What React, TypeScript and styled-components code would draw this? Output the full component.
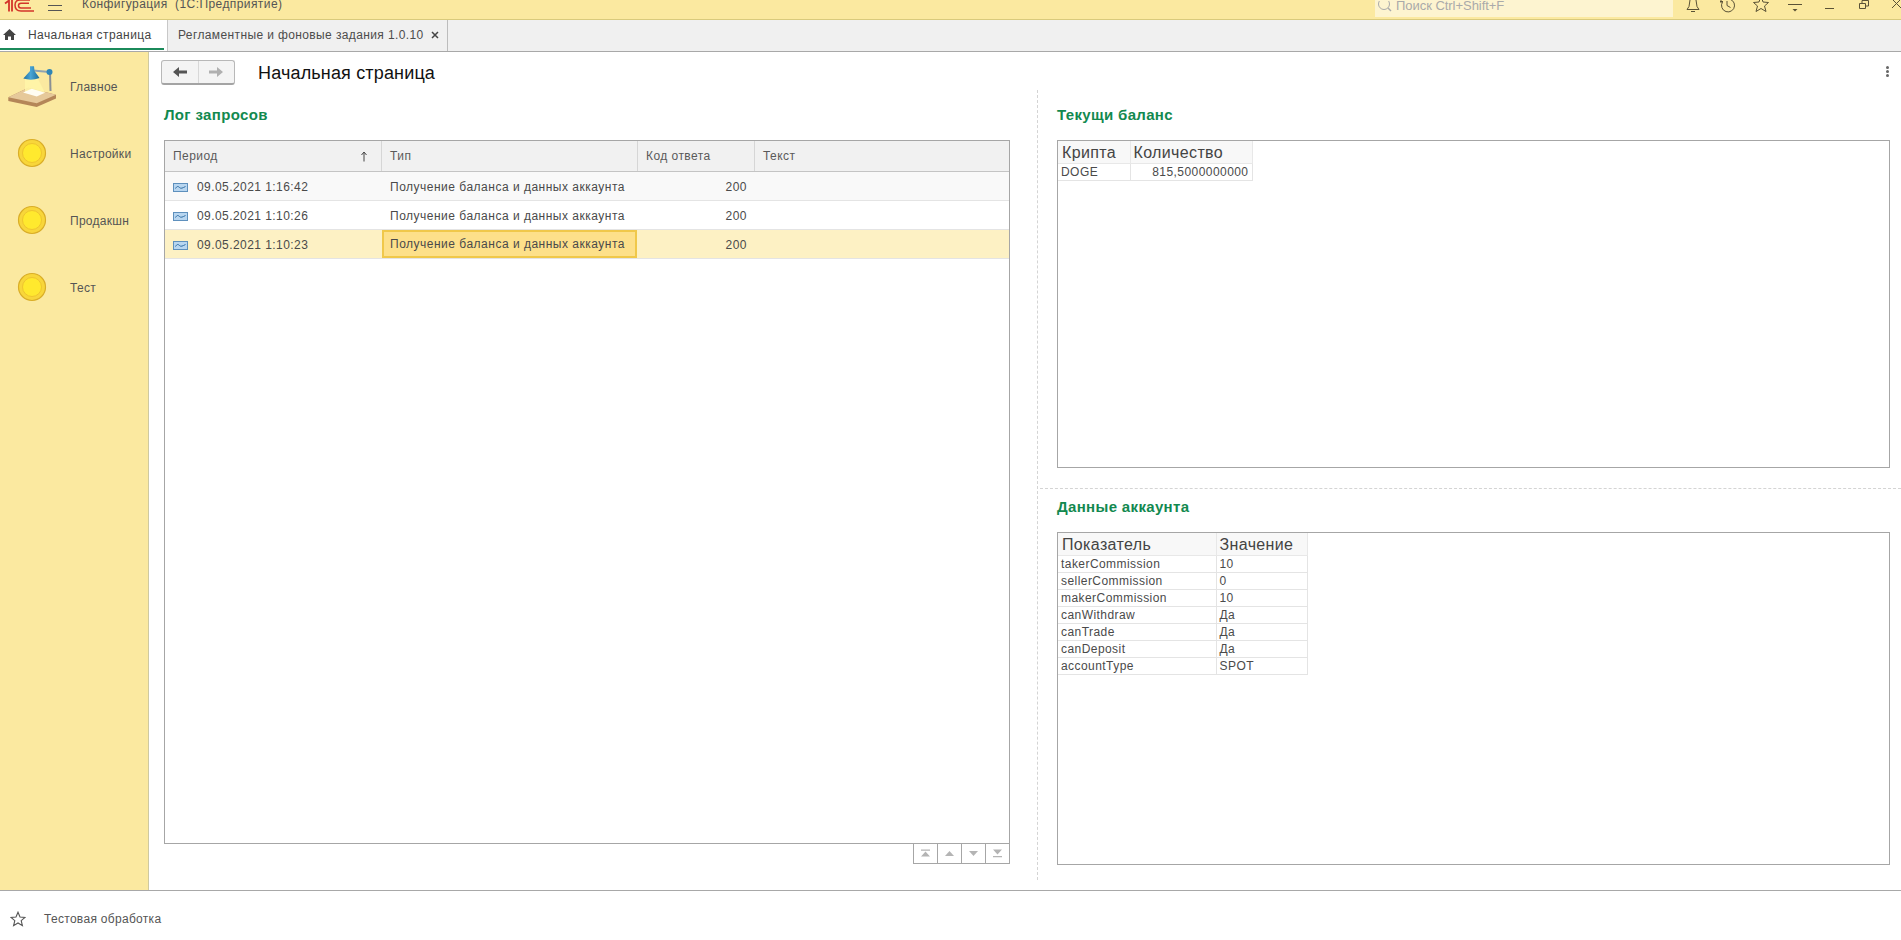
import React from "react";
import styled, { createGlobalStyle } from "styled-components";

const Global = createGlobalStyle`
  html, body { margin: 0; padding: 0; background: #fff; }
  * { box-sizing: border-box; }
  body { font-family: "Liberation Sans", Arial, sans-serif; color: #4b4b4b; font-size: 12px; }
`;

const Page = styled.div`
  width: 1901px; height: 940px; display: flex; flex-direction: column; overflow: hidden; background: #fff;
`;
const TopBar = styled.header`
  height: 20px; flex: none; background: #fbe9a0; border-bottom: 1px solid #d9ca7c;
  display: flex; overflow: hidden;
`;
const TopLeft = styled.div`
  display: flex; align-items: center; height: 20px;
`;
const TopTitle = styled.span`
  font-size: 12px; letter-spacing: .42px; color: #555; white-space: pre; margin: -12px 0 0 20px;
`;
const Logo = styled.svg`
  width: 34px; height: 20px; margin-left: 4px; flex: none;
`;
const Burger = styled.svg`
  width: 14px; height: 20px; margin-left: 10px; flex: none;
`;
const TopRight = styled.div`
  margin-left: auto; display: flex; height: 20px;
`;
const Search = styled.div`
  width: 298px; height: 17px; background: #fdf4d0; display: flex; align-items: center;
  color: #aaa; font-size: 13px; overflow: hidden; padding-left: 2px; margin-right: 3px;
`;
const SearchText = styled.span`
  margin-left: 3px; margin-top: -7px; letter-spacing: -.04px;
`;
const TopIcon = styled.svg`
  width: 34px; height: 20px; flex: none;
`;
const CloseIcon = styled.svg`
  width: 21px; height: 20px; flex: none;
`;
const Tabs = styled.nav`
  height: 32px; flex: none; background: #f0f0f0; border-bottom: 1px solid #a8a8a8; display: flex;
`;
const HomeTab = styled.div`
  width: 168px; background: #fff; border-right: 1px solid #c8c8c8; position: relative;
  display: flex; align-items: center; padding: 0 0 2px 3px; color: #444;
  &::after { content: ""; position: absolute; left: 0; width: 164px; bottom: 1px; height: 2px; background: #1b8a5a; }
`;
const TabLabel = styled.span`
  font-size: 12px; letter-spacing: .42px; margin-left: 12px; white-space: nowrap;
`;
const DocTab = styled.div`
  width: 280px; border-right: 1px solid #bcbcbc; display: flex; align-items: center; padding: 0 0 2px 10px; color: #4c4c4c;
`;
const DocLabel = styled.span`
  font-size: 12px; letter-spacing: .38px; white-space: nowrap;
`;
const CloseMark = styled.svg`
  width: 8px; height: 8px; margin-left: 7px;
`;
const Body = styled.div`
  flex: 1; display: flex; min-height: 0;
`;
const Sidebar = styled.aside`
  width: 149px; flex: none; background: #fbe9a0; border-right: 1px solid #cfc9a0;
`;
const NavItem = styled.div`
  height: 67px; display: flex; align-items: center; color: #555;
`;
const NavIcon = styled.div`
  width: 70px; flex: none; display: flex; justify-content: center; padding-right: 6px;
`;
const NavLabel = styled.span`
  font-size: 12px; letter-spacing: .28px; margin-top: 2px;
`;
const Content = styled.main`
  flex: 1; display: flex; flex-direction: column; min-width: 0;
`;
const ContentHead = styled.div`
  height: 38px; flex: none; display: flex; align-items: flex-start; padding: 8px 12px 0 12px;
`;
const NavButtons = styled.div`
  width: 74px; height: 25px; display: flex; border: 1px solid #b8b8b8; border-bottom: 2px solid #a4a4a4; border-radius: 3px; background: #f4f4f4;
`;
const NavBtn = styled.div<{ $first?: boolean }>`
  flex: 1; display: flex; align-items: center; justify-content: center;
  ${p => (p.$first ? "border-right: 1px solid #d8d8d8;" : "")}
`;
const PageTitle = styled.h1`
  margin: 0 0 0 23px; font-weight: 400; font-size: 18px; letter-spacing: .16px; color: #111; line-height: 26px;
`;
const Dots = styled.div`
  margin-left: auto; margin-top: 6px; display: flex; flex-direction: column; gap: 1px;
  i { width: 3px; height: 3px; background: #666; border-radius: 50%; display: block; }
`;
const Panes = styled.div`
  flex: 1; display: flex; min-height: 0; padding-bottom: 10px;
`;
const LeftPane = styled.section`
  width: 888px; flex: none; padding: 0 27px 16px 15px; display: flex; flex-direction: column;
`;
const RightPane = styled.section`
  flex: 1; border-left: 1px dashed #d4d4d4; display: flex; flex-direction: column; min-width: 0;
`;
const SectionTitle = styled.h2`
  margin: 0; height: 50px; flex: none; font-size: 15px; font-weight: 700; color: #12894f; line-height: 49px;
  letter-spacing: .34px;
`;
const Grid = styled.div`
  flex: 1; border: 1px solid #a6a6a6; display: flex; flex-direction: column; min-height: 0;
`;
const LogRow = styled.div<{ $kind?: "head" | "odd" | "sel" }>`
  display: grid; grid-template-columns: 217px 256px 117px 1fr; flex: none;
  height: ${p => (p.$kind === "head" ? 31 : 29)}px;
  background: ${p => (p.$kind === "head" ? "#f1f1f1" : p.$kind === "odd" ? "#f9f9f9" : p.$kind === "sel" ? "#fdf1c4" : "#fff")};
  border-bottom: 1px solid ${p => (p.$kind === "head" ? "#c4c4c4" : "#e4e4e4")};
`;
const HeadCell = styled.div`
  display: flex; align-items: center; justify-content: space-between; padding: 0 13px 0 8px; border-right: 1px solid #d6d6d6;
  color: #5a5a5a; font-size: 12px; letter-spacing: .45px;
  &:last-child { border-right: 0; }
`;
const Cell = styled.div<{ $right?: boolean; $cur?: boolean }>`
  display: flex; align-items: center; padding: 2px 8px 0; font-size: 12px; letter-spacing: .5px; color: #4a4a4a; white-space: nowrap;
  ${p => (p.$right ? "justify-content: flex-end;" : "")}
  ${p => (p.$cur ? "background: #fde08a; border: 2px solid #f0c84a; padding: 0 6px; margin-right: 1px;" : "")}
`;
const PeriodText = styled.span`
  margin-left: 9px; letter-spacing: .44px;
`;
const Pager = styled.div`
  display: flex; justify-content: flex-end; flex: none;
`;
const PagerBtn = styled.div`
  width: 25px; height: 21px; margin: -1px 0 0 -1px; border: 1px solid #a6a6a6; display: flex; align-items: center; justify-content: center; background: #fff;
`;
const BalanceBlock = styled.div`
  height: 399px; flex: none; border-bottom: 1px dashed #d4d4d4; margin-left: 2px; padding: 0 11px 20px 17px; display: flex; flex-direction: column;
`;
const AccountBlock = styled.div`
  flex: 1; margin-left: 2px; padding: 0 11px 15px 17px; display: flex; flex-direction: column; min-height: 0;
`;
const AccountTitle = styled(SectionTitle)`
  height: 43px; line-height: 35px;
`;
const Sheet = styled.div`
  flex: 1; border: 1px solid #a6a6a6; min-height: 0;
`;
const SheetTable = styled.table`
  border-collapse: collapse; table-layout: fixed;
`;
const Th = styled.th<{ $w: number }>`
  width: ${p => p.$w}px; height: 22px; padding: 2px 3px 0; text-align: left; font-weight: 400; font-size: 16px; letter-spacing: .36px; color: #444;
  background: #f8f8f8; border: 1px solid #e8e8e8; border-top: 0; white-space: nowrap;
  &:first-child { border-left: 0; padding-left: 4px; }
`;
const Td = styled.td<{ $right?: boolean }>`
  height: 17px; padding: 0 3px; font-size: 12px; line-height: 14px; color: #4a4a4a; border: 1px solid #e4e4e4; white-space: nowrap;
  letter-spacing: .44px; text-align: ${p => (p.$right ? "right" : "left")};
  &:first-child { border-left: 0; padding-left: 3px; }
`;
const Footer = styled.footer`
  height: 50px; flex: none; border-top: 1px solid #a8a8a8; display: flex; align-items: center; padding: 6px 0 0 10px; color: #555;
`;
const FooterLabel = styled.span`
  margin-left: 18px; font-size: 12px; letter-spacing: .3px;
`;

const Coin = () => (
  <svg width="30" height="30" viewBox="0 0 30 30">
    <circle cx="15" cy="15" r="13.5" fill="#f8d63a" stroke="#d9ad28" strokeWidth="1.2" />
    <circle cx="15" cy="15" r="9.5" fill="#ffe92e" stroke="#efc52e" strokeWidth="1" />
  </svg>
);
const Lamp = () => (
  <svg width="50" height="42" viewBox="0 0 50 42">
    <defs>
      <linearGradient id="shade" x1="0" x2="1" y1="0" y2="0">
        <stop offset="0" stopColor="#1f6f9f" />
        <stop offset=".45" stopColor="#49a5d6" />
        <stop offset="1" stopColor="#1d6b9a" />
      </linearGradient>
    </defs>
    <path d="M1.3 32.2 L21.3 22.8 L49 29.8 L49 33.5 L29.7 42 L1.3 36 Z" fill="#b48658" />
    <path d="M1.3 32.2 L21.3 22.8 L49 29.8 L29.7 38.2 Z" fill="#e6c99a" />
    <path d="M18 14 L31 14 L38 27.8 L18 27 Z" fill="#fff6a8" opacity=".85" />
    <path d="M16 27.5 L24.7 23.8 L38 27.8 L29.7 31.6 Z" fill="#fffdf2" />
    <path d="M43 7 L43.5 26" stroke="#8a8f94" strokeWidth="2" />
    <path d="M26 5.5 L42.3 7" stroke="#8fa3b2" strokeWidth="2" />
    <circle cx="42.5" cy="7" r="3" fill="#2f86b6" />
    <path d="M23 1.2 L27 1.2 L27.5 6 L32.5 13 Q24.5 16 16.3 13.5 L23 6 Z" fill="url(#shade)" />
  </svg>
);
const RowIcon = () => (
  <svg width="15" height="9" viewBox="0 0 15 9">
    <rect x=".5" y=".5" width="14" height="8" fill="#b8d6f0" stroke="#5e90bd" />
    <path d="M2.5 5.5 C4 3 5 3 6.5 4.5 C8 6 9.5 5 12.5 3.5" fill="none" stroke="#2f6da3" strokeWidth="1" />
  </svg>
);
const Star = ({ c = "#555" }: { c?: string }) => (
  <svg width="16" height="16" viewBox="0 0 16 16">
    <path d="M8 1.2 L10 6 L15 6.4 L11.2 9.7 L12.4 14.7 L8 12 L3.6 14.7 L4.8 9.7 L1 6.4 L6 6 Z" fill="none" stroke={c} strokeWidth="1.1" />
  </svg>
);

const logs = ["09.05.2021 1:16:42", "09.05.2021 1:10:26", "09.05.2021 1:10:23"];
const account: [string, string][] = [
  ["takerCommission", "10"], ["sellerCommission", "0"], ["makerCommission", "10"], ["canWithdraw", "Да"],
  ["canTrade", "Да"], ["canDeposit", "Да"], ["accountType", "SPOT"],
];
const nav = ["Настройки", "Продакшн", "Тест"];
const pagerIcons = [
  "M4 .5 H13 V1.8 H4 Z M8.5 2.5 L13 7.5 H4 Z",
  "M8.5 2 L13 7 H4 Z",
  "M4 2 H13 L8.5 7 Z",
  "M4 .5 H13 L8.5 5.5 Z M4 7 H13 V8.3 H4 Z",
];

export default function App() {
  return (
    <Page>
      <Global />
      <TopBar>
        <TopLeft>
          <Logo viewBox="0 0 34 20">
            <path d="M1 3.5 L5 0.5 V11.5 M8 0 V11.5" stroke="#d3342a" strokeWidth="1.8" fill="none" />
            <path d="M26 0 H16 Q11 0 11 5 Q11 11 17 11 H30" stroke="#d3342a" strokeWidth="1.5" fill="none" />
            <path d="M25 3.2 H17 Q14.5 3.2 14.5 5.5 Q14.5 8 17 8 H27" stroke="#d3342a" strokeWidth="1.5" fill="none" />
          </Logo>
          <Burger viewBox="0 0 14 20">
            <path d="M0 5.5 H14 M0 10.5 H14" stroke="#555" strokeWidth="1" />
          </Burger>
          <TopTitle>Конфигурация  (1С:Предприятие)</TopTitle>
        </TopLeft>
        <TopRight>
          <Search>
            <svg width="16" height="16" viewBox="0 0 16 16">
              <circle cx="7" cy="3" r="5.5" fill="none" stroke="#aaa" />
              <path d="M11 7 L14 10" stroke="#aaa" strokeWidth="1.4" />
            </svg>
            <SearchText>Поиск Ctrl+Shift+F</SearchText>
          </Search>
          <TopIcon viewBox="0 0 34 20">
            <path d="M11 9.5 H23 L21 6.5 L20 0 M14 0 L13 6.5 L11 9.5 M15 11.5 H19" fill="none" stroke="#5a5236" />
          </TopIcon>
          <TopIcon viewBox="0 0 34 20">
            <path d="M12.5 2 A6.5 6.5 0 1 0 17 -1 M17 1 V5.5 L20.5 7.5 M10 1.5 L13 1.5 M11 0 V3" fill="none" stroke="#5a5236" />
          </TopIcon>
          <TopIcon viewBox="0 0 34 20">
            <path d="M17 -4 L19 2 L24.5 2.5 L20.5 6 L22 11.5 L17 8.5 L12 11.5 L13.5 6 L9.5 2.5 L15 2 Z" fill="none" stroke="#5a5236" />
          </TopIcon>
          <TopIcon viewBox="0 0 34 20">
            <path d="M10 4.5 H24" stroke="#5a5236" /><path d="M14.5 9 H19.5 L17 11.5 Z" fill="#5a5236" />
          </TopIcon>
          <TopIcon viewBox="0 0 34 20">
            <path d="M13 8.5 H22" stroke="#5a5236" />
          </TopIcon>
          <TopIcon viewBox="0 0 34 20">
            <path d="M13.5 3.5 H19.5 V8.5 H13.5 Z M16 3.5 V.5 H22.5 V6 H19.5" fill="none" stroke="#5a5236" />
          </TopIcon>
          <CloseIcon viewBox="0 0 21 20">
            <path d="M12 -1 L21 8 M21 -1 L12 8" stroke="#5a5236" />
          </CloseIcon>
        </TopRight>
      </TopBar>
      <Tabs>
        <HomeTab>
          <svg width="13" height="13" viewBox="0 0 13 13">
            <path d="M6.5 1 L13 7 H11 V12 H8 V8.5 H5 V12 H2 V7 H0 Z" fill="#444" />
          </svg>
          <TabLabel>Начальная страница</TabLabel>
        </HomeTab>
        <DocTab>
          <DocLabel>Регламентные и фоновые задания 1.0.10</DocLabel>
          <CloseMark viewBox="0 0 8 8"><path d="M1 1 L7 7 M7 1 L1 7" stroke="#444" strokeWidth="1.5" /></CloseMark>
        </DocTab>
      </Tabs>
      <Body>
        <Sidebar>
          <NavItem>
            <NavIcon><Lamp /></NavIcon>
            <NavLabel>Главное</NavLabel>
          </NavItem>
          {nav.map(n => (
            <NavItem key={n}>
              <NavIcon><Coin /></NavIcon>
              <NavLabel>{n}</NavLabel>
            </NavItem>
          ))}
        </Sidebar>
        <Content>
          <ContentHead>
            <NavButtons>
              <NavBtn $first>
                <svg width="14" height="10" viewBox="0 0 14 10"><path d="M0 5 L6 0 V3.6 H14 V6.4 H6 V10 Z" fill="#555" /></svg>
              </NavBtn>
              <NavBtn>
                <svg width="14" height="10" viewBox="0 0 14 10"><path d="M14 5 L8 0 V3.6 H0 V6.4 H8 V10 Z" fill="#b0b0b0" /></svg>
              </NavBtn>
            </NavButtons>
            <PageTitle>Начальная страница</PageTitle>
            <Dots><i /><i /><i /></Dots>
          </ContentHead>
          <Panes>
            <LeftPane>
              <SectionTitle>Лог запросов</SectionTitle>
              <Grid>
                <LogRow $kind="head">
                  <HeadCell>
                    Период
                    <svg width="8" height="11" viewBox="0 0 8 11"><path d="M4 10.5 V1.5 M1.5 4 L4 1 L6.5 4" fill="none" stroke="#444" /></svg>
                  </HeadCell>
                  <HeadCell>Тип</HeadCell>
                  <HeadCell>Код ответа</HeadCell>
                  <HeadCell>Текст</HeadCell>
                </LogRow>
                {logs.map((d, i) => (
                  <LogRow key={d} $kind={i === 0 ? "odd" : i === 2 ? "sel" : undefined}>
                    <Cell><RowIcon /><PeriodText>{d}</PeriodText></Cell>
                    <Cell $cur={i === 2}>Получение баланса и данных аккаунта</Cell>
                    <Cell $right>200</Cell>
                    <Cell />
                  </LogRow>
                ))}
              </Grid>
              <Pager>
                {pagerIcons.map(d => (
                  <PagerBtn key={d}>
                    <svg width="17" height="9" viewBox="0 0 17 9"><path d={d} fill="#b4b4b4" /></svg>
                  </PagerBtn>
                ))}
              </Pager>
            </LeftPane>
            <RightPane>
              <BalanceBlock>
                <SectionTitle>Текущи баланс</SectionTitle>
                <Sheet>
                  <SheetTable>
                    <thead>
                      <tr><Th $w={72}>Крипта</Th><Th $w={122}>Количество</Th></tr>
                    </thead>
                    <tbody>
                      <tr><Td>DOGE</Td><Td $right>815,5000000000</Td></tr>
                    </tbody>
                  </SheetTable>
                </Sheet>
              </BalanceBlock>
              <AccountBlock>
                <AccountTitle>Данные аккаунта</AccountTitle>
                <Sheet>
                  <SheetTable>
                    <thead>
                      <tr><Th $w={158}>Показатель</Th><Th $w={91}>Значение</Th></tr>
                    </thead>
                    <tbody>
                      {account.map(([k, v]) => (
                        <tr key={k}><Td>{k}</Td><Td>{v}</Td></tr>
                      ))}
                    </tbody>
                  </SheetTable>
                </Sheet>
              </AccountBlock>
            </RightPane>
          </Panes>
        </Content>
      </Body>
      <Footer>
        <Star />
        <FooterLabel>Тестовая обработка</FooterLabel>
      </Footer>
    </Page>
  );
}
